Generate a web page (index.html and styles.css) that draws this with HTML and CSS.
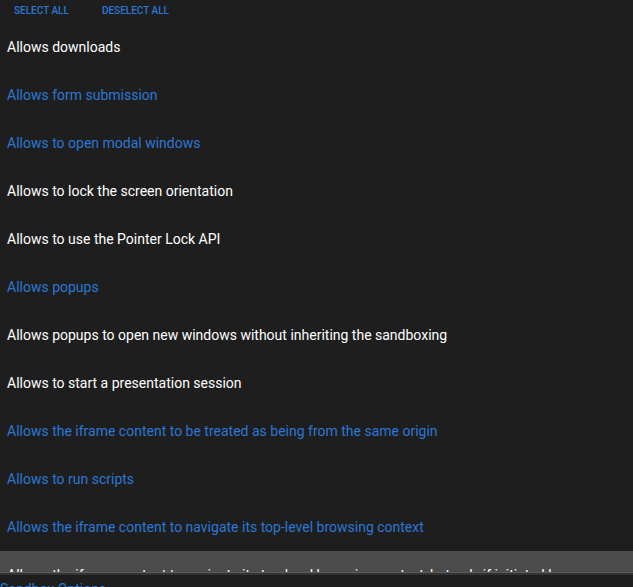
FILE: index.html
```html
<!DOCTYPE html>
<html>
<head>
<meta charset="utf-8">
<link rel="stylesheet" href="styles.css">
</head>
<body>
<div class="toolbar">
  <button class="tbtn">SELECT ALL</button>
  <button class="tbtn">DESELECT ALL</button>
</div>
<div class="list">
  <div class="item">Allows downloads</div>
  <div class="item sel">Allows form submission</div>
  <div class="item sel">Allows to open modal windows</div>
  <div class="item">Allows to lock the screen orientation</div>
  <div class="item">Allows to use the Pointer Lock API</div>
  <div class="item sel">Allows popups</div>
  <div class="item">Allows popups to open new windows without inheriting the sandboxing</div>
  <div class="item">Allows to start a presentation session</div>
  <div class="item sel">Allows the iframe content to be treated as being from the same origin</div>
  <div class="item sel">Allows to run scripts</div>
  <div class="item sel">Allows the iframe content to navigate its top-level browsing context</div>
  <div class="item hover">Allows the iframe content to navigate its top-level browsing context, but only if initiated by user</div>
</div>
<div class="label">Sandbox Options</div>
</body>
</html>
```
FILE: styles.css
```css
html, body {
  margin: 0;
  padding: 0;
  background: #1e1e1e;
  font-family: Roboto, "Liberation Sans", sans-serif;
  overflow: hidden;
}
.toolbar {
  display: flex;
  height: 23px;
  align-items: center;
  gap: 5px;
}
.tbtn {
  background: none;
  border: none;
  padding: 0 14px;
  margin: 0;
  font-family: Roboto, "Liberation Sans", sans-serif;
  font-weight: 500;
  font-size: 10px;
  color: #2a78d6;
  height: 20px;
  margin-top: -3px;
  cursor: pointer;
}
.list {
  height: 549px;
  overflow: hidden;
  border-bottom: 1px solid #5c5c5c;
  box-shadow: 0 2px 0 #333;
}
.item {
  height: 48px;
  display: flex;
  align-items: center;
  padding-left: 7px;
  font-size: 14px;
  color: #ffffff;
  white-space: nowrap;
}
.item.sel {
  color: #2a78d6;
}
.item.hover {
  background: #4b4b4b;
  color: #ffffff;
}
.label {
  margin-top: 8px;
  font-size: 14px;
  color: #2a78d6;
}
```
